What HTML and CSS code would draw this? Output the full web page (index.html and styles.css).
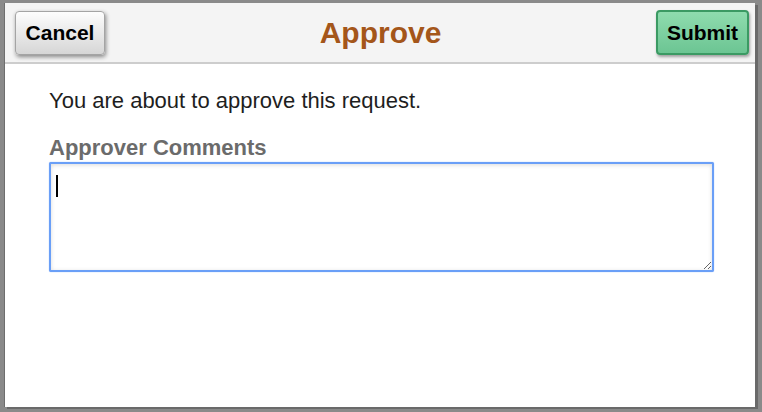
FILE: index.html
```html
<!DOCTYPE html>
<html lang="en">
<head>
    <meta charset="UTF-8">
    <title>Approve</title>
    <link rel="stylesheet" href="styles.css">
</head>
<body>
    <div class="dialog">
        <div class="header">
            <button class="btn cancel">Cancel</button>
            <h1 class="title">Approve</h1>
            <button class="btn submit">Submit</button>
        </div>
        <div class="content">
            <p class="msg">You are about to approve this request.</p>
            <label class="label" for="comments">Approver Comments</label>
            <div class="field">
                <textarea id="comments" class="comments" autofocus></textarea>
                <!-- 光标 -->
                <span class="caret"></span>
            </div>
        </div>
    </div>
</body>
</html>
```

FILE: styles.css
```css
html, body {
    margin: 0;
    padding: 0;
    height: 100%;
}
body {
    background: #8a8a8a;
    font-family: "Liberation Sans", Arial, sans-serif;
    padding: 3px 0 0 4px;
    box-sizing: border-box;
}
.dialog {
    width: 750px;
    height: 404px;
    background: #fff;
    border-left: 1px solid #6e6e6e;
    box-shadow: 3px 2px 0 #6a6a6a;
    display: flex;
    flex-direction: column;
}
.header {
    height: 59px;
    background: #f4f4f4;
    border-bottom: 2px solid #cdcdcd;
    display: flex;
    align-items: center;
    justify-content: space-between;
    padding: 0 6px 0 10px;
}
.title {
    margin: 0;
    font-size: 30px;
    font-weight: bold;
    color: #a4561a;
}
.btn {
    font-family: "Liberation Sans", Arial, sans-serif;
    font-size: 21px;
    font-weight: bold;
    color: #000;
    border-radius: 4px;
    cursor: pointer;
    padding: 0;
}
.cancel {
    width: 90px;
    height: 44px;
    background: linear-gradient(#fdfdfd, #d6d6d6);
    border: 1px solid #a4a4a4;
    box-shadow: 1px 2px 4px rgba(0,0,0,0.45);
}
.submit {
    width: 93px;
    height: 45px;
    background: linear-gradient(#8fdcae, #6cc593);
    border: 2px solid #3b9a63;
    box-shadow: 1px 2px 3px rgba(0,0,0,0.35);
}
.content {
    padding: 24px 0 0 44px;
}
.msg {
    margin: 0;
    font-size: 22px;
    line-height: 25px;
    color: #1e1e1e;
}
.label {
    display: block;
    margin-top: 22px;
    font-size: 22px;
    line-height: 25px;
    font-weight: bold;
    color: #6b6b6b;
}
.field {
    position: relative;
    width: 665px;
    margin-top: 2px;
}
.comments {
    display: block;
    width: 665px;
    height: 110px;
    box-sizing: border-box;
    border: 2px solid #6a9ff7;
    border-radius: 2px;
    outline: none;
    box-shadow: inset 0 1px 4px rgba(0,0,0,0.15), 0 0 1px #6a9ff7;
    font-family: "Liberation Sans", Arial, sans-serif;
    font-size: 22px;
    padding: 8px 5px;
    resize: both;
}
.caret {
    position: absolute;
    left: 7px;
    top: 13px;
    width: 2px;
    height: 22px;
    background: #000;
}
```
